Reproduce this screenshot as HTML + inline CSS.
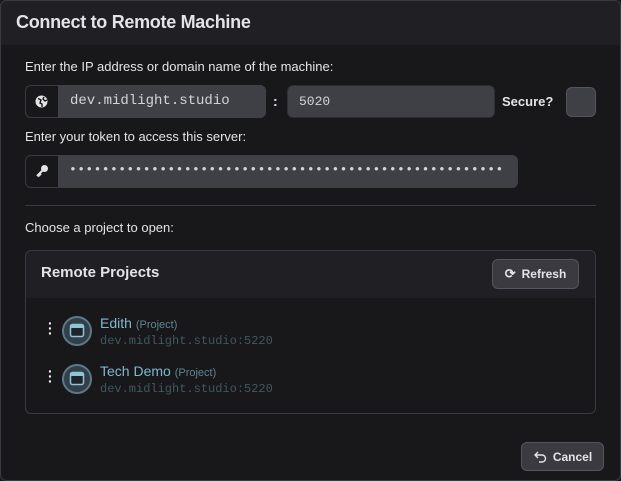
<!DOCTYPE html><html><head><style>
*{margin:0;padding:0;box-sizing:border-box}
body{width:621px;height:481px;background:#18181b;font-family:"Liberation Sans",sans-serif;color:#e4e4e7;position:relative;overflow:hidden}
.frame{position:absolute;left:0;top:0;width:621px;height:481px;border-radius:6px;background:#18181b;overflow:hidden}
.border{position:absolute;left:0;top:0;width:621px;height:481px;border:1px solid #3a3a40;border-radius:6px;pointer-events:none}
.hdr{position:absolute;left:0;top:0;width:621px;height:45px;background:#202024}
.abs{position:absolute}
.title{left:16px;top:12px;font-size:18px;font-weight:bold;color:#e4e4e7;letter-spacing:-0.3px}
.lbl{font-size:13px;color:#e4e4e7}
.box{background:#3f3f46;border:1px solid #2e2e33;border-radius:6px}
.mono{font-family:"Liberation Mono",monospace}
.btn{background:#3a3a40;border:1px solid #55555c;border-radius:6px;font-size:12px;font-weight:bold;color:#e4e4e7;display:flex;align-items:center;justify-content:center;gap:6px}
</style></head><body><div class="frame">
<div class="hdr"></div>
<div class="abs title">Connect to Remote Machine</div>
<div class="abs lbl" style="left:25px;top:59px">Enter the IP address or domain name of the machine:</div>
<div class="abs box" style="left:25px;top:85px;width:241px;height:33px;background:#18181b;border-color:#3a3a40"></div>
<div class="abs" style="left:58px;top:85px;width:208px;height:33px;background:#3f3f46;border-radius:0 6px 6px 0"></div>
<svg class="abs" style="left:35px;top:95px" width="13" height="13" viewBox="0 0 13 13"><circle cx="6.5" cy="6.5" r="6" fill="#e4e4e7"/><path d="M3 3.5 L6 5 L5 8 L7 9 L7 12 M9 2 L8 4 L10 6 L12 5" stroke="#18181b" stroke-width="1.4" fill="none"/></svg>
<div class="abs mono" style="left:70px;top:93px;font-size:14px;color:#d4d4d8">dev.midlight.studio</div>
<div class="abs" style="left:273px;top:93px;font-size:14px;font-weight:bold">:</div>
<div class="abs box" style="left:287px;top:85px;width:208px;height:33px"></div>
<div class="abs mono" style="left:299px;top:94px;font-size:13px;color:#d4d4d8">5020</div>
<div class="abs lbl" style="left:502px;top:94px;font-weight:bold">Secure?</div>
<div class="abs box" style="left:566px;top:87px;width:30px;height:30px;border-color:#55555c"></div>
<div class="abs lbl" style="left:25px;top:129px">Enter your token to access this server:</div>
<div class="abs box" style="left:25px;top:155px;width:493px;height:33px;background:#18181b;border-color:#3a3a40"></div>
<div class="abs" style="left:58px;top:155px;width:460px;height:33px;background:#3f3f46;border-radius:0 6px 6px 0"></div>
<svg class="abs" style="left:35px;top:164px" width="14" height="14" viewBox="0 0 14 14"><circle cx="9.5" cy="4.5" r="3.5" fill="#e4e4e7"/><path d="M8 6 L2 12 M3 11 L4.5 12.5 M4.5 9.5 L6 11" stroke="#e4e4e7" stroke-width="2" fill="none"/></svg>
<div class="abs mono" style="left:69px;top:162px;font-size:13px;letter-spacing:0.4px;color:#d4d4d8;white-space:nowrap">•••••••••••••••••••••••••••••••••••••••••••••••••••••</div>
<div class="abs" style="left:25px;top:205px;width:571px;height:1px;background:#3a3a40"></div>
<div class="abs lbl" style="left:25px;top:220px">Choose a project to open:</div>
<div class="abs" style="left:25px;top:250px;width:571px;height:164px;border:1px solid #3a3a40;border-radius:6px;overflow:hidden">
<div style="height:47px;background:#202024"></div></div>
<div class="abs" style="left:41px;top:264px;font-size:15px;font-weight:bold;color:#e4e4e7">Remote Projects</div>
<div class="abs btn" style="left:492px;top:259px;width:87px;height:30px"><span style="font-size:13px">⟳</span>Refresh</div>
<div class="abs" style="left:48px;top:321px;font-size:14px;line-height:5px;font-weight:bold;color:#fff">·<br>·<br>·</div>
<div class="abs" style="left:48px;top:369px;font-size:14px;line-height:5px;font-weight:bold;color:#fff">·<br>·<br>·</div>
<svg class="abs" style="left:61px;top:315px" width="32" height="32"><circle cx="16" cy="16" r="14" fill="#344049" stroke="#5c7a86" stroke-width="2"/><rect x="9.5" y="9.5" width="13" height="12" rx="2" fill="#1d2429" stroke="#8fc4d6" stroke-width="1.5"/><rect x="10" y="10" width="12" height="3" fill="#8fc4d6"/></svg>
<svg class="abs" style="left:61px;top:363px" width="32" height="32"><circle cx="16" cy="16" r="14" fill="#344049" stroke="#5c7a86" stroke-width="2"/><rect x="9.5" y="9.5" width="13" height="12" rx="2" fill="#1d2429" stroke="#8fc4d6" stroke-width="1.5"/><rect x="10" y="10" width="12" height="3" fill="#8fc4d6"/></svg>
<div class="abs" style="left:100px;top:315px;font-size:14px;color:#7fb8cc">Edith <span style="font-size:11px;color:#5f8594">(Project)</span></div>
<div class="abs mono" style="left:100px;top:334px;font-size:12px;color:#3f5862">dev.midlight.studio:5220</div>
<div class="abs" style="left:100px;top:363px;font-size:14px;color:#7fb8cc">Tech Demo <span style="font-size:11px;color:#5f8594">(Project)</span></div>
<div class="abs mono" style="left:100px;top:382px;font-size:12px;color:#3f5862">dev.midlight.studio:5220</div>
<div class="abs btn" style="left:521px;top:442px;width:83px;height:29px"><svg width="14" height="14" viewBox="0 0 14 14"><path d="M5 2 L2 5 L5 8 M2 5 H9 A3.5 3.5 0 0 1 9 12 H6" stroke="#e4e4e7" stroke-width="1.4" fill="none"/></svg>Cancel</div>
</div><div class="border"></div></body></html>
